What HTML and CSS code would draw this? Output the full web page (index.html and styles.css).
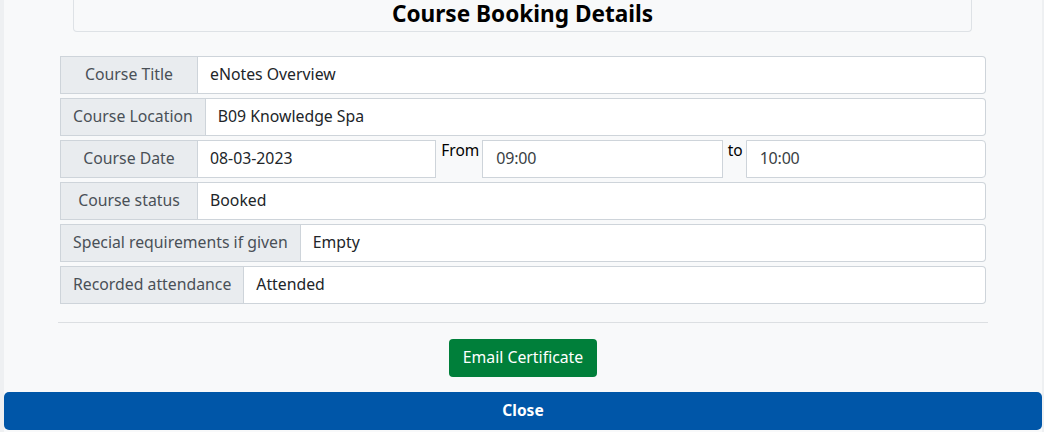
FILE: index.html
```html
<!DOCTYPE html>
<html lang="en">
<head>
<meta charset="utf-8">
<title>Course Booking Details</title>
<link rel="stylesheet" href="styles.css">
</head>
<body>
<div class="panel">
  <div class="content">
    <div class="title-box"><h4 class="title">Course Booking Details</h4></div>
    <div class="rows">
      <div class="group">
        <span class="label">Course Title</span>
        <div class="value last">eNotes Overview</div>
      </div>
      <div class="group">
        <span class="label">Course Location</span>
        <div class="value last">B09 Knowledge Spa</div>
      </div>
      <div class="group">
        <span class="label">Course Date</span>
        <div class="value">08-03-2023</div>
        <span class="sep">From</span>
        <div class="value time">09:00</div>
        <span class="sep">to</span>
        <div class="value time last">10:00</div>
      </div>
      <div class="group">
        <span class="label">Course status</span>
        <div class="value last">Booked</div>
      </div>
      <div class="group">
        <span class="label">Special requirements if given</span>
        <div class="value last">Empty</div>
      </div>
      <div class="group">
        <span class="label">Recorded attendance</span>
        <div class="value last">Attended</div>
      </div>
    </div>
    <hr class="divider">
    <div class="actions">
      <button class="btn-green" type="button">Email Certificate</button>
    </div>
  </div>
  <button class="btn-close" type="button">Close</button>
</div>
</body>
</html>
```
FILE: styles.css
```css
* { box-sizing: border-box; }
html, body { margin: 0; padding: 0; }
body {
  background: #eef0f2;
  font-family: "Noto Sans", "Open Sans", sans-serif;
  font-size: 15.8px;
  color: #212529;
  width: 1044px;
  height: 432px;
  overflow: hidden;
}
.panel {
  margin-left: 4px;
  width: 1038px;
  height: 432px;
  background: #f8f9fa;
  display: flex;
  flex-direction: column;
}
.content {
  padding: 0 56px;
  flex: 1;
}
.title-box {
  margin: 0 14px 0 13px;
  height: 32px;
  border: 1px solid #dee2e6;
  border-top: none;
  border-radius: 0 0 4px 4px;
  display: flex;
  align-items: center;
  justify-content: center;
}
.title {
  margin: 0 0 2px;
  font-size: 22.6px;
  font-weight: 700;
  color: #000;
  line-height: 1;
}
.rows {
  margin-top: 24px;
  display: flex;
  flex-direction: column;
  gap: 4px;
}
.group {
  display: flex;
  height: 38px;
}
.label {
  min-width: 138px;
  padding: 0 12px 2px;
  background: #e9ecef;
  border: 1px solid #ced4da;
  color: #495057;
  display: flex;
  align-items: center;
  justify-content: center;
  white-space: nowrap;
}
.value {
  flex: 1;
  background: #fff;
  border: 1px solid #ced4da;
  border-left: none;
  padding: 0 12px 2px;
  display: flex;
  align-items: center;
  color: #212529;
}
.value.last { border-top-right-radius: 4px; border-bottom-right-radius: 4px; }
.value.time { border-left: 1px solid #ced4da; padding-left: 13px; font-size: 16px; letter-spacing: -0.2px; color: #3a3f44; }
.sep {
  padding: 3px 3px 0 5px;
  line-height: 1;
  color: #000;
  font-size: 15.5px;
}
.divider {
  margin: 18px -2px 0 -2px;
  border: none;
  border-top: 1px solid #dcdfe2;
}
.actions {
  display: flex;
  justify-content: center;
  margin-top: 16px;
}
.btn-green {
  height: 38px;
  padding: 0 14px 2px;
  background: #007f3a;
  color: #fff;
  border: none;
  border-radius: 4px;
  font-family: inherit;
  font-size: 15.8px;
}
.btn-close {
  margin-bottom: 2px;
  height: 38px;
  padding-bottom: 3px;
  width: 100%;
  background: #0056a8;
  color: #fff;
  border: none;
  border-radius: 5px;
  font-family: inherit;
  font-size: 15.5px;
  font-weight: 700;
}
```
